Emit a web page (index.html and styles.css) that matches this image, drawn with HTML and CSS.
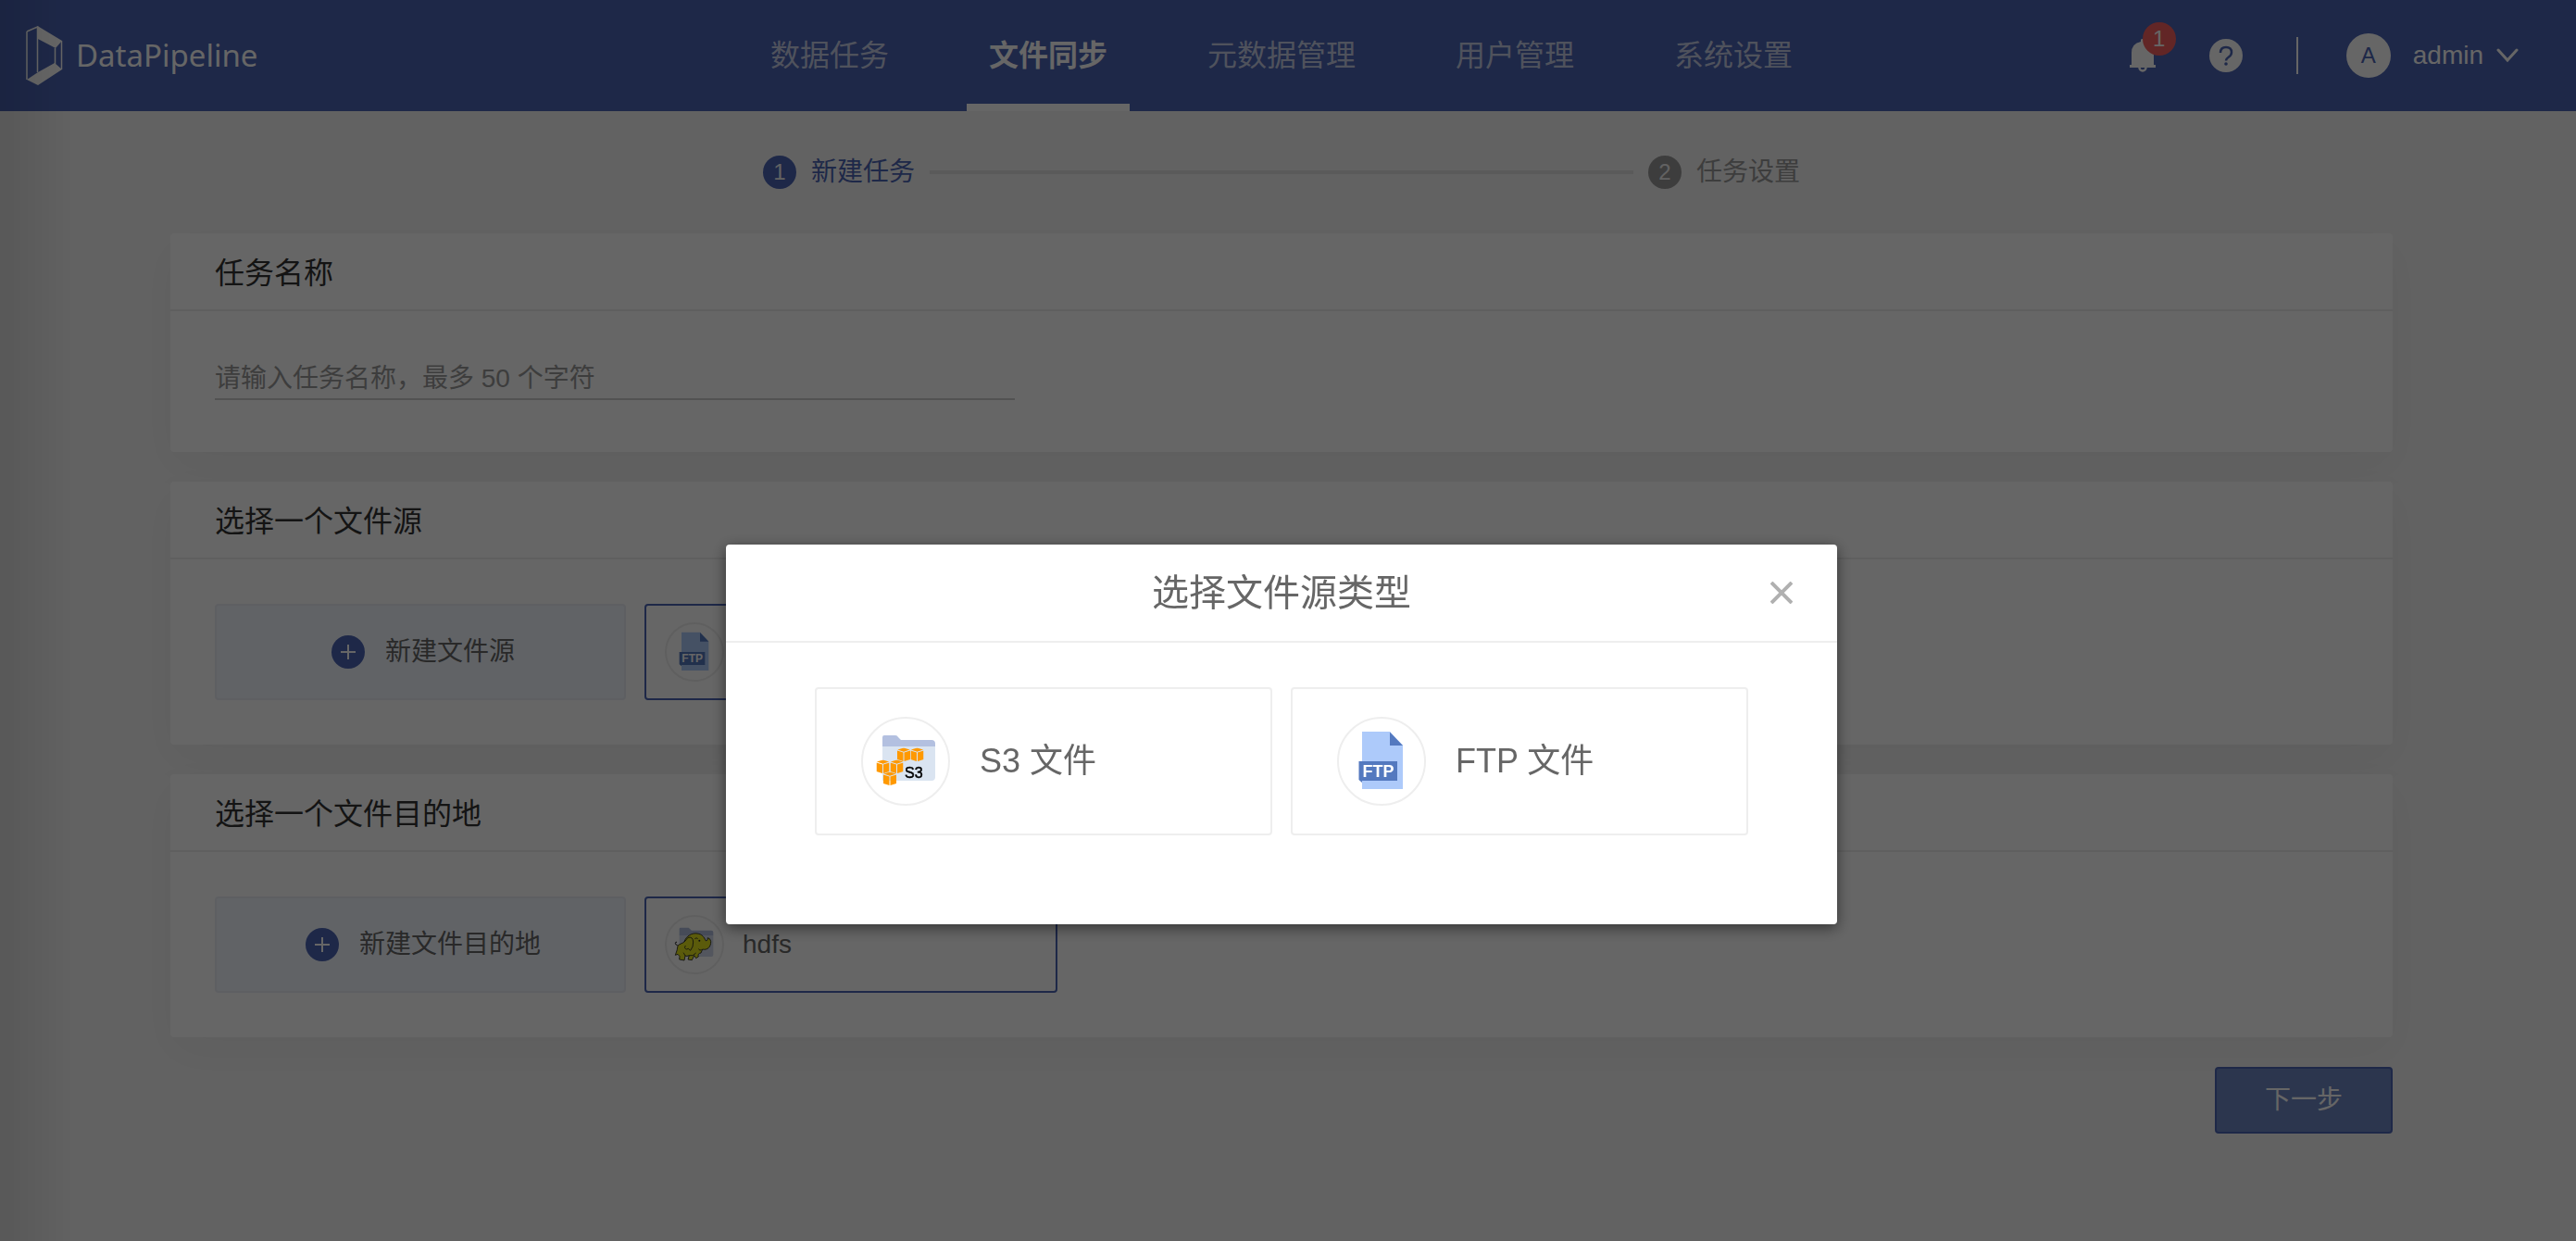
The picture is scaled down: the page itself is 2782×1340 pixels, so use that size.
FILE: index.html
```html
<!DOCTYPE html>
<html lang="zh-CN">
<head>
<meta charset="utf-8">
<meta name="viewport" content="width=device-width, initial-scale=1.0">
<title>DataPipeline</title>
<link rel="stylesheet" href="styles.css">
</head>
<body>

<!-- 图标 -->
<svg class="sprite" aria-hidden="true">
	<symbol id="icon-plus" viewBox="0 0 36 36">
		<circle cx="18" cy="18" r="18" fill="#4b64b4"/>
		<path d="M18 10v16M10 18h16" stroke="#fff" stroke-width="2"/>
	</symbol>
	<symbol id="icon-ftp" viewBox="0 0 96 96">
		<path d="M27 16h30l14 15v47H27z" fill="#adcafa"/>
		<path d="M57 16.500l14 14.500H57z" fill="#5479bf"/>
		<path d="M23.500 48H65v21H27v2l-3.500-3z" fill="#5479bf"/>
		<text x="44.500" y="65" text-anchor="middle" font-size="18" font-weight="bold" fill="#fff">FTP</text>
	</symbol>
	<symbol id="cube" viewBox="0 0 14 15">
		<path d="M7 0l6.600 2L7 4.200.400 2zM0 3l6.500 2v9.500L0 12.500zM14 3L7.500 5v9.500l6.500-2z" fill="#ff9900"/>
	</symbol>
	<symbol id="icon-s3" viewBox="0 0 96 96">
		<path d="M23 30h57v35q0 4-4 4H23z" fill="#dae4f1"/>
		<path d="M23 32V22q0-2 2-2h12q2 0 3 2l3 3h33q4 0 4 4v3z" fill="#b3c0e0"/>
		<use href="#cube" x="39" y="33.500" width="14" height="15"/>
		<use href="#cube" x="53.500" y="33.500" width="14" height="15"/>
		<use href="#cube" x="16.500" y="46.500" width="14" height="15"/>
		<use href="#cube" x="31.500" y="46.500" width="14" height="15"/>
		<use href="#cube" x="24" y="59.500" width="14" height="15"/>
		<text x="47" y="66" font-size="16" fill="#000" stroke="#000" stroke-width=".5">S3</text>
	</symbol>
	<symbol id="icon-hdfs" viewBox="55 55 192 192">
		<path d="M102 120h110v64q0 6-6 6H102z" fill="#d0d8ea"/>
		<path d="M102 121V100q0-4 4-4h26l10 9h64q6 0 6 6v10z" fill="#b0bcdc"/>
		<path d="M96 153q-8-2-7-7t5-3" fill="none" stroke="#222" stroke-width="3"/>
		<path d="M97 154C104 148 112 147 118 142C124 122 144 112 160 115C176 117 182 126 187 138Q194 140 194 129Q202 130 204 140C205 158 193 170 177 166L172 178Q160 180 164 190L156 195L150 186L143 201L130 199L134 186Q126 190 121 187L118 202L102 199L103 189L97 182L89 185Q96 168 97 154Z" fill="#e4e41c" stroke="#222" stroke-width="2.500" stroke-linejoin="round"/>
		<path d="M118 142Q126 134 130 128Q146 124 147 142Q148 158 138 170Q130 160 126 166Q116 164 122 154M134 186Q146 190 156 178M152 132q6-5 10 0M164 165q5 8 10 2M121 187q-4-8-6-10" fill="none" stroke="#222" stroke-width="2.500"/>
		<circle cx="167" cy="138" r="3" fill="#222"/>
	</symbol>
</svg>

<header class="header">
	<a class="logo" href="#">
		<svg width="40" height="64" viewBox="0 0 40 64" aria-hidden="true">
			<path d="M1 6L12.500 1V50M1 6v52" fill="none" stroke="#fff" stroke-width="1.500"/>
			<path d="M12.500 0L39 16l-7 8L13 14zM1 58l12-8 18-10 8 7L13 64z" fill="#fff"/>
			<path d="M38.500 16v31M31.500 24v17" stroke="#fff" stroke-width="1.500"/>
		</svg>
		<span class="logo-text">DataPipeline</span>
	</a>
	<nav class="nav">
		<a href="#">数据任务</a>
		<a class="active" href="#">文件同步</a>
		<a href="#">元数据管理</a>
		<a href="#">用户管理</a>
		<a href="#">系统设置</a>
	</nav>
	<div class="user-area">
		<button class="bell" type="button" aria-label="通知">
			<svg width="28" height="36" viewBox="0 0 28 36" aria-hidden="true">
				<path d="M12 3V1q0-1 2-1t2 1v2q10 2 10 12v13h2v3H0v-3h2V15Q2 5 12 3z" fill="#fff"/>
				<path d="M10.500 31a3.500 3.500 0 0 0 7 0" fill="none" stroke="#fff" stroke-width="2.500"/>
			</svg>
			<span class="badge">1</span>
		</button>
		<button class="help" type="button" aria-label="帮助">
			<svg width="36" height="36" viewBox="0 0 36 36" aria-hidden="true">
				<circle cx="18" cy="18" r="18" fill="#fff"/>
				<path d="M12 15q0-6 6-6t6 5.500q0 3-3 5t-3 4" fill="none" stroke="#4b64b4" stroke-width="2.500"/>
				<circle cx="18" cy="27" r="1.800" fill="#4b64b4"/>
			</svg>
		</button>
		<span class="divider"></span>
		<button class="user" type="button">
			<span class="avatar">A</span>
			<span class="user-name">admin</span>
			<svg width="24" height="16" viewBox="0 0 24 16" aria-hidden="true">
				<path d="M2 2l10 11L22 2" fill="none" stroke="#fff" stroke-width="3" stroke-linecap="round"/>
			</svg>
		</button>
	</div>
</header>

<main class="main">
	<ol class="steps">
		<li class="step current"><span class="num">1</span>新建任务</li>
		<li class="line" role="presentation"></li>
		<li class="step"><span class="num">2</span>任务设置</li>
	</ol>

	<section class="card">
		<h2 class="card-title"><label for="taskName">任务名称</label></h2>
		<div class="card-body name-body">
			<input class="task-name" id="taskName" type="text" maxlength="50" placeholder="请输入任务名称，最多 50 个字符">
		</div>
	</section>

	<section class="card">
		<h2 class="card-title">选择一个文件源</h2>
		<div class="card-body tiles">
			<button class="tile tile-new" type="button">
				<svg width="36" height="36" aria-hidden="true"><use href="#icon-plus"/></svg>新建文件源
			</button>
			<button class="tile tile-item" type="button" aria-label="FTP">
				<span class="round"><svg aria-hidden="true"><use href="#icon-ftp"/></svg></span>
			</button>
		</div>
	</section>

	<section class="card">
		<h2 class="card-title">选择一个文件目的地</h2>
		<div class="card-body tiles">
			<button class="tile tile-new" type="button">
				<svg width="36" height="36" aria-hidden="true"><use href="#icon-plus"/></svg>新建文件目的地
			</button>
			<button class="tile tile-item" type="button">
				<span class="round"><svg aria-hidden="true"><use href="#icon-hdfs"/></svg></span>hdfs
			</button>
		</div>
	</section>

	<div class="actions">
		<button class="next" type="button">下一步</button>
	</div>
</main>

<!-- 文件源类型弹窗 -->
<div class="mask">
	<div class="modal" role="dialog" aria-modal="true" aria-labelledby="modalTitle">
		<div class="modal-header">
			<h3 id="modalTitle">选择文件源类型</h3>
			<button class="close" type="button" aria-label="关闭">
				<svg width="24" height="24" viewBox="0 0 24 24" aria-hidden="true">
					<path d="M1 1l22 22M23 1L1 23" stroke="#b0b0b0" stroke-width="4"/>
				</svg>
			</button>
		</div>
		<div class="modal-body">
			<button class="type" type="button">
				<span class="round big"><svg aria-hidden="true"><use href="#icon-s3"/></svg></span>S3 文件
			</button>
			<button class="type" type="button">
				<span class="round big"><svg aria-hidden="true"><use href="#icon-ftp"/></svg></span>FTP 文件
			</button>
		</div>
	</div>
</div>

</body>
</html>
```

FILE: styles.css
```css
*{box-sizing:border-box;}
body{margin:0;min-height:100vh;background:#f5f5f5;color:#666;font-family:"Liberation Sans","Noto Sans CJK SC",sans-serif;font-size:28px;line-height:1.2;}
button,input{font:inherit;color:inherit;margin:0;padding:0;border:none;background:none;}
button{cursor:pointer;}
a{text-decoration:none;}
svg{display:block;flex:none;}
.sprite{display:none;}

/* 顶部导航 */
.header{display:grid;grid-template-columns:1fr auto 1fr;height:120px;padding-right:14px;background:#4b64b4;color:#fff;}
.logo{display:flex;align-items:center;gap:14px;padding-left:28px;color:#fff;}
.logo-text{font-family:"Noto Sans",sans-serif;font-size:33px;}
.nav{display:flex;gap:60px;}
.nav a{height:120px;padding:0 24px;line-height:120px;font-size:32px;color:rgba(255,255,255,.7);}
.nav a.active{border-bottom:8px solid #fff;color:#fff;font-weight:bold;}
.user-area{display:flex;align-items:center;justify-content:flex-end;padding-right:48px;}
.bell{position:relative;}
.badge{position:absolute;left:14px;top:-18px;width:36px;height:36px;border-radius:50%;background:#f55f5f;font-size:24px;line-height:36px;text-align:center;color:#fff;}
.help{margin-left:58px;}
.divider{width:2px;height:40px;margin:0 52px 0 58px;background:#fff;}
.user{display:flex;align-items:center;color:#fff;}
.avatar{width:48px;height:48px;margin-right:24px;border-radius:50%;background:#fff;color:#4b64b4;font-size:24px;line-height:48px;}
.user-name{margin-right:14px;}

/* 步骤条 */
.main{margin:0 198px 0 184px;}
.steps{display:flex;align-items:center;max-width:1120px;margin:0 auto;padding:48px 0;list-style:none;}
.step{display:flex;align-items:center;gap:16px;height:36px;color:#999;}
.num{width:36px;height:36px;border-radius:50%;background:#999;color:#f5f5f5;font-size:24px;line-height:36px;text-align:center;}
.current{color:#4b64b4;}
.current .num{background:#4b64b4;}
.line{flex:1;height:4px;margin:0 16px;background:#e0e0e0;}

/* 卡片 */
.card{margin-bottom:32px;border-radius:4px;background:#fff;box-shadow:0 16px 48px rgba(0,0,0,.04);}
.card-title{margin:0;padding:4px 48px 0;border-bottom:2px solid #eee;font-size:32px;font-weight:normal;line-height:78px;color:#333;}
.card-body{padding:48px;}
.name-body{padding:48px 48px 56px;}
.task-name{display:block;width:864px;max-width:100%;height:48px;padding-top:4px;border-bottom:2px solid #ccc;outline:none;}
.task-name::placeholder{color:#999;opacity:1;}
.tiles{display:flex;gap:20px;}
.tile{display:flex;align-items:center;width:444px;height:104px;border:2px solid #ebeef5;border-radius:4px;}
.tile-new{justify-content:center;gap:22px;padding-left:6px;background:#f2f7ff;}
.tile-item{width:446px;gap:20px;padding:0 20px;border-color:#4b64b4;}
.round{width:64px;height:64px;border:2px solid #eee;border-radius:50%;}
.round svg{width:64px;height:64px;margin:-2px;}
.actions{display:flex;justify-content:flex-end;}
.next{width:192px;height:72px;border:2px solid #4b64b4;border-radius:4px;background:#6e87c3;color:#fff;}

/* 弹窗 */
.mask{position:fixed;top:0;right:0;bottom:0;left:0;display:flex;align-items:flex-start;justify-content:center;padding:588px 14px 0 0;background:linear-gradient(to right,rgba(0,0,0,.1),transparent 80px),rgba(0,0,0,.6);}
.modal{width:1200px;border-radius:4px;background:#fff;box-shadow:0 4px 16px rgba(0,0,0,.5);}
.modal-header{display:grid;grid-template-columns:1fr auto 1fr;align-items:center;height:106px;padding:0 48px;border-bottom:2px solid #eee;}
.modal-header h3{grid-column:2;margin:0;font-size:40px;font-weight:normal;}
.close{justify-self:end;}
.modal-body{display:flex;gap:20px;padding:48px 96px 96px;}
.type{display:flex;flex:1;align-items:center;gap:32px;height:160px;padding:0 48px;border:2px solid #eee;border-radius:4px;font-size:36px;}
.round.big,.round.big svg{width:96px;height:96px;}
```
